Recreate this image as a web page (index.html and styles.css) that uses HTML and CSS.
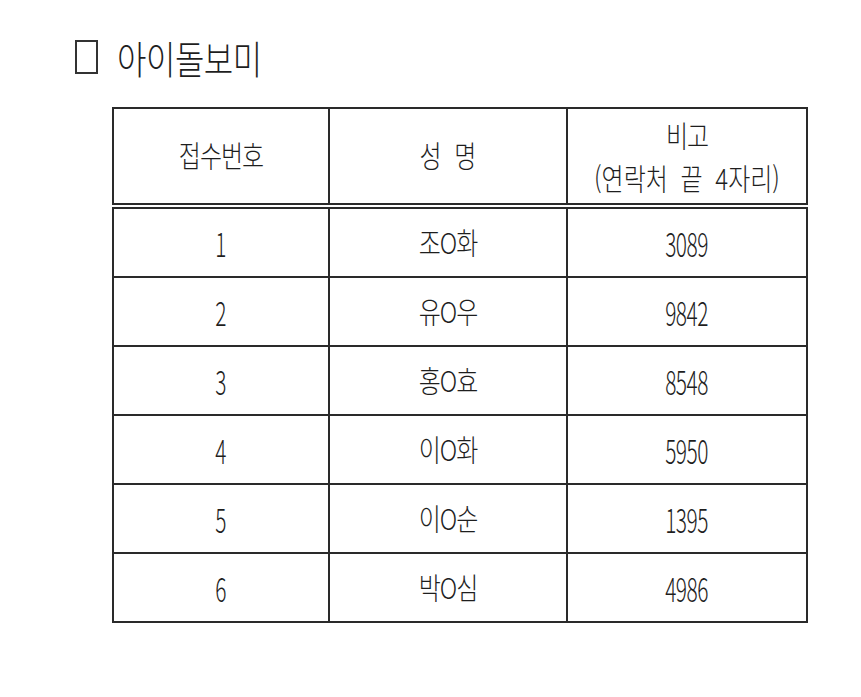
FILE: index.html
```html
<!DOCTYPE html>
<html lang="ko">
<head>
<meta charset="utf-8">
<title>아이돌보미</title>
<link rel="stylesheet" href="styles.css">
</head>
<body>
<div class="page">
  <div class="title">
    <span class="box"></span>
    <span class="ttext">아이돌보미</span>
  </div>
  <table class="list">
    <colgroup>
      <col class="w1"><col class="w2"><col class="w3">
    </colgroup>
    <thead>
      <tr>
        <th><span class="k">접수번호</span></th>
        <th><span class="k wide">성 명</span></th>
        <th><div class="stack"><span class="k">비고</span><span class="k wide">(연락처 끝 4자리)</span></div></th>
      </tr>
    </thead>
    <tbody>
      <tr><td><span class="d">1</span></td><td><span class="k">조O화</span></td><td><span class="d">3089</span></td></tr>
      <tr><td><span class="d">2</span></td><td><span class="k">유O우</span></td><td><span class="d">9842</span></td></tr>
      <tr><td><span class="d">3</span></td><td><span class="k">홍O효</span></td><td><span class="d">8548</span></td></tr>
      <tr><td><span class="d">4</span></td><td><span class="k">이O화</span></td><td><span class="d">5950</span></td></tr>
      <tr><td><span class="d">5</span></td><td><span class="k">이O순</span></td><td><span class="d">1395</span></td></tr>
      <tr><td><span class="d">6</span></td><td><span class="k">박O심</span></td><td><span class="d">4986</span></td></tr>
    </tbody>
  </table>
</div>
</body>
</html>
```

FILE: styles.css
```css
html, body {
  margin: 0;
  padding: 0;
  background: #ffffff;
}
body {
  font-family: "Noto Sans CJK KR", "Noto Sans", sans-serif;
  color: #1e1e1e;
}
.page {
  padding: 40px 0 0 75px;
}
.title {
  display: flex;
  align-items: center;
  height: 34px;
  gap: 19px;
  margin-bottom: 33px;
}
.box {
  display: inline-block;
  width: 19px;
  height: 30px;
  border: 2px solid #333333;
}
.ttext {
  display: inline-block;
  font-size: 32px;
  font-weight: 300;
  line-height: 34px;
  letter-spacing: -0.5px;
  transform: scaleY(1.2);
}
.list {
  margin-left: 37px;
  border-collapse: collapse;
  table-layout: fixed;
  width: 694px;
}
.w1 { width: 216px; }
.w2 { width: 238px; }
.w3 { width: 240px; }
.list th, .list td {
  border: 2px solid #2a2a2a;
  text-align: center;
  vertical-align: middle;
  padding: 0;
  font-weight: 300;
}
.list th {
  height: 94px;
  border-bottom: 6px double #2a2a2a;
}
.list td {
  height: 67px;
}
.k {
  display: inline-block;
  font-size: 24px;
  line-height: 26px;
  letter-spacing: -1px;
  transform: scaleY(1.22);
}
.wide {
  word-spacing: 6px;
  letter-spacing: 0;
}
.d {
  display: inline-block;
  font-size: 22px;
  line-height: 26px;
  letter-spacing: -0.5px;
  transform: scale(0.95, 1.5);
}
.stack {
  display: flex;
  flex-direction: column;
  align-items: center;
  gap: 17px;
}
```
